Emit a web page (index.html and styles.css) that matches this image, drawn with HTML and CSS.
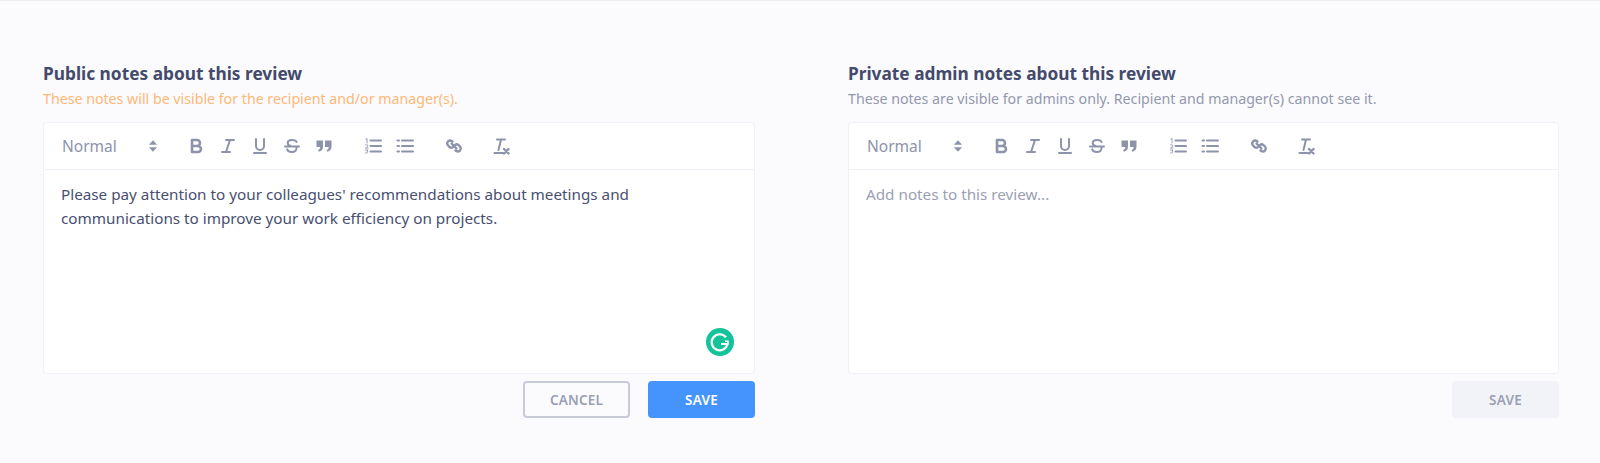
FILE: index.html
```html
<!DOCTYPE html>
<html lang="en">
<head>
<meta charset="utf-8">
<title>Review notes</title>
<link rel="stylesheet" href="styles.css">
</head>
<body>
<main class="page">
  <section class="col">
    <h2 class="title">Public notes about this review</h2>
    <p class="sub sub-warn">These notes will be visible for the recipient and/or manager(s).</p>
    <div class="editor">
      <div class="toolbar">
        <span class="picker">Normal<svg class="updown" viewBox="0 0 8 12"><path d="M4 1 7.500 5h-7zM4 11 .5 7h7z"/></svg></span>
        <span class="group">
          <svg class="ic ic-bold" viewBox="0 0 18 18"><path d="M5 3h5a3 3 0 0 1 0 6H5zM5 9h6a3 3 0 0 1 0 6H5z"/></svg>
          <svg class="ic" viewBox="0 0 18 18"><path d="M7 3h8M3 15h8M11 3 7 15"/></svg>
          <svg class="ic" viewBox="0 0 18 18"><path d="M5 2v7a4 4 0 0 0 8 0V2M3 16h12"/></svg>
          <svg class="ic" viewBox="0 0 18 18"><path d="M13.500 5C13 3.500 11 3 9 3 6.500 3 4.700 4.200 4.700 6c0 1.400 1 2.400 3 3M2 9.500h14M13.500 10.500c.5 2.500-1.500 4.500-4.500 4.500-2.500 0-4.300-1-4.800-2.600"/></svg>
          <svg class="ic ic-fill" viewBox="0 0 18 18"><path d="M1.500 3.500h6.500v6c0 2.700-1.500 4.700-4.200 5.300l-.7-1.700c1.400-.5 2.100-1.600 2.100-3.100H1.500zM10 3.500h6.500v6c0 2.700-1.500 4.700-4.200 5.300l-.7-1.700c1.400-.5 2.100-1.600 2.100-3.100H10z"/></svg>
        </span>
        <span class="group">
          <svg class="ic" viewBox="0 0 18 18"><path d="M6.500 3.500H17M6.500 9H17M6.500 14.500H17"/><path class="num" d="M2 2l1-.5V6M1.500 8c1.500-1 3 0 2 1.500L1.500 11h2.500M1.500 13h2.500l-1 1.300c1.500 0 1.500 2.200-1.500 1.700"/></svg>
          <svg class="ic" viewBox="0 0 18 18"><path d="M6 3.500H17M6 9H17M6 14.500H17M1.500 3.500h1.500M1.500 9h1.500M1.500 14.500h1.500"/></svg>
        </span>
        <span class="group group-tight">
          <svg class="ic ic-link" viewBox="0 0 18 18"><path d="M7.500 4.500 6.500 3.800a3 3 0 0 0-4 4L4 9.500a3 3 0 0 0 4.200.4M10.500 13.500l1 .7a3 3 0 0 0 4-4L14 8.500a3 3 0 0 0-4.200-.4M6.500 6.500l5 5"/></svg>
        </span>
        <span class="group">
          <svg class="ic" viewBox="0 0 18 18"><path d="M5 2.500h8M9 2.500 6.500 13M2.500 16h8.500"/><path class="x" d="m12 12 4.500 4.500M16.500 12 12 16.500"/></svg>
        </span>
      </div>
      <div class="body">
        <p class="text">Please pay attention to your colleagues' recommendations about meetings and communications to improve your work efficiency on projects.</p>
        <span class="grammarly">
          <svg viewBox="0 0 28 28"><circle cx="14" cy="14" r="14" fill="#15c39a"/><path d="M20 9.300A8 8 0 1 0 21.500 16H15" fill="none" stroke="#fff" stroke-width="2.200"/><path d="M19 13.200h3v3.400" fill="none" stroke="#fff" stroke-width="1.600"/></svg>
        </span>
      </div>
    </div>
    <div class="actions">
      <button class="btn btn-ghost" type="button">CANCEL</button>
      <button class="btn btn-primary" type="button">SAVE</button>
    </div>
  </section>

  <section class="col">
    <h2 class="title">Private admin notes about this review</h2>
    <p class="sub">These notes are visible for admins only. Recipient and manager(s) cannot see it.</p>
    <div class="editor">
      <div class="toolbar">
        <span class="picker">Normal<svg class="updown" viewBox="0 0 8 12"><path d="M4 1 7.500 5h-7zM4 11 .5 7h7z"/></svg></span>
        <span class="group">
          <svg class="ic ic-bold" viewBox="0 0 18 18"><path d="M5 3h5a3 3 0 0 1 0 6H5zM5 9h6a3 3 0 0 1 0 6H5z"/></svg>
          <svg class="ic" viewBox="0 0 18 18"><path d="M7 3h8M3 15h8M11 3 7 15"/></svg>
          <svg class="ic" viewBox="0 0 18 18"><path d="M5 2v7a4 4 0 0 0 8 0V2M3 16h12"/></svg>
          <svg class="ic" viewBox="0 0 18 18"><path d="M13.500 5C13 3.500 11 3 9 3 6.500 3 4.700 4.200 4.700 6c0 1.400 1 2.400 3 3M2 9.500h14M13.500 10.500c.5 2.500-1.500 4.500-4.500 4.500-2.500 0-4.300-1-4.800-2.600"/></svg>
          <svg class="ic ic-fill" viewBox="0 0 18 18"><path d="M1.500 3.500h6.500v6c0 2.700-1.500 4.700-4.200 5.300l-.7-1.700c1.400-.5 2.100-1.600 2.100-3.100H1.500zM10 3.500h6.500v6c0 2.700-1.500 4.700-4.200 5.300l-.7-1.700c1.400-.5 2.100-1.600 2.100-3.100H10z"/></svg>
        </span>
        <span class="group">
          <svg class="ic" viewBox="0 0 18 18"><path d="M6.500 3.500H17M6.500 9H17M6.500 14.500H17"/><path class="num" d="M2 2l1-.5V6M1.500 8c1.500-1 3 0 2 1.500L1.500 11h2.500M1.500 13h2.500l-1 1.300c1.500 0 1.500 2.200-1.500 1.700"/></svg>
          <svg class="ic" viewBox="0 0 18 18"><path d="M6 3.500H17M6 9H17M6 14.500H17M1.500 3.500h1.500M1.500 9h1.500M1.500 14.500h1.500"/></svg>
        </span>
        <span class="group group-tight">
          <svg class="ic ic-link" viewBox="0 0 18 18"><path d="M7.500 4.500 6.500 3.800a3 3 0 0 0-4 4L4 9.500a3 3 0 0 0 4.200.4M10.500 13.500l1 .7a3 3 0 0 0 4-4L14 8.500a3 3 0 0 0-4.200-.4M6.500 6.500l5 5"/></svg>
        </span>
        <span class="group">
          <svg class="ic" viewBox="0 0 18 18"><path d="M5 2.500h8M9 2.500 6.500 13M2.500 16h8.500"/><path class="x" d="m12 12 4.500 4.500M16.500 12 12 16.500"/></svg>
        </span>
      </div>
      <div class="body">
        <p class="text text-placeholder">Add notes to this review...</p>
      </div>
    </div>
    <div class="actions">
      <button class="btn btn-disabled" type="button">SAVE</button>
    </div>
  </section>
</main>
</body>
</html>
```

FILE: styles.css
```css
* { box-sizing: border-box; }
html, body { height: 100%; }
body {
  margin: 0;
  background: #fbfbfd;
  border-top: 1px solid #eceef3;
  font-family: "Noto Sans", "Open Sans", sans-serif;
  color: #434a6b;
  overflow: hidden;
}
.page {
  display: grid;
  grid-template-columns: 712px 711px;
  column-gap: 93px;
  padding: 61px 41px 0 43px;
}
.col { min-width: 0; }
.title {
  margin: 0;
  font-size: 17.300px;
  line-height: 24px;
  font-weight: 700;
  color: #434a6b;
}
.sub {
  margin: 3px 0 0;
  font-size: 14.200px;
  line-height: 20px;
  color: #9398ae;
}
.sub-warn { color: #fdb877; }
.editor {
  margin-top: 13px;
  height: 252px;
  background: #fff;
  border: 1px solid #f0f1f6;
  border-radius: 4px;
  display: flex;
  flex-direction: column;
}
.toolbar {
  height: 47px;
  flex: none;
  display: flex;
  align-items: center;
  padding-left: 18px;
  border-bottom: 1px solid #f0f1f6;
}
.picker {
  width: 125px;
  display: flex;
  align-items: center;
  font-size: 15.500px;
  color: #8d93ab;
}
.updown {
  width: 10px;
  height: 14px;
  margin-left: 31px;
  fill: #8d93ab;
}
.group {
  display: flex;
  gap: 14px;
  margin-right: 31px;
}
.group-tight { margin-right: 29px; }
.ic {
  width: 18px;
  height: 18px;
  fill: none;
  stroke: #8d93ab;
  stroke-width: 2;
  stroke-linecap: round;
  stroke-linejoin: round;
}
.ic-bold { stroke-width: 2.600; }
.ic-fill { fill: #8d93ab; stroke: none; }
.ic-link { stroke-width: 2.400; }
.num { stroke-width: .9; }
.x { stroke-width: 2.400; }
.body {
  flex: 1;
  position: relative;
  padding: 12px 17px;
}
.text {
  margin: 0;
  font-size: 15.250px;
  line-height: 24px;
  color: #484f70;
  max-width: 600px;
}
.text-placeholder { color: #9a9fb4; }
.grammarly {
  position: absolute;
  right: 20px;
  bottom: 17px;
  width: 28px;
  height: 28px;
}
.grammarly svg { display: block; width: 28px; height: 28px; }
.actions {
  margin-top: 7px;
  display: flex;
  justify-content: flex-end;
  gap: 18px;
}
.btn {
  height: 37px;
  width: 107px;
  border-radius: 4px;
  border: 0;
  font: 600 13.500px "Noto Sans", "Open Sans", sans-serif;
  letter-spacing: .2px;
}
.btn-ghost { background: transparent; border: 2px solid #c8cbd7; color: #9a9fb4; }
.btn-primary { background: #4593fc; color: #fff; }
.btn-disabled { background: #f2f3f8; color: #9a9fb4; }
```
